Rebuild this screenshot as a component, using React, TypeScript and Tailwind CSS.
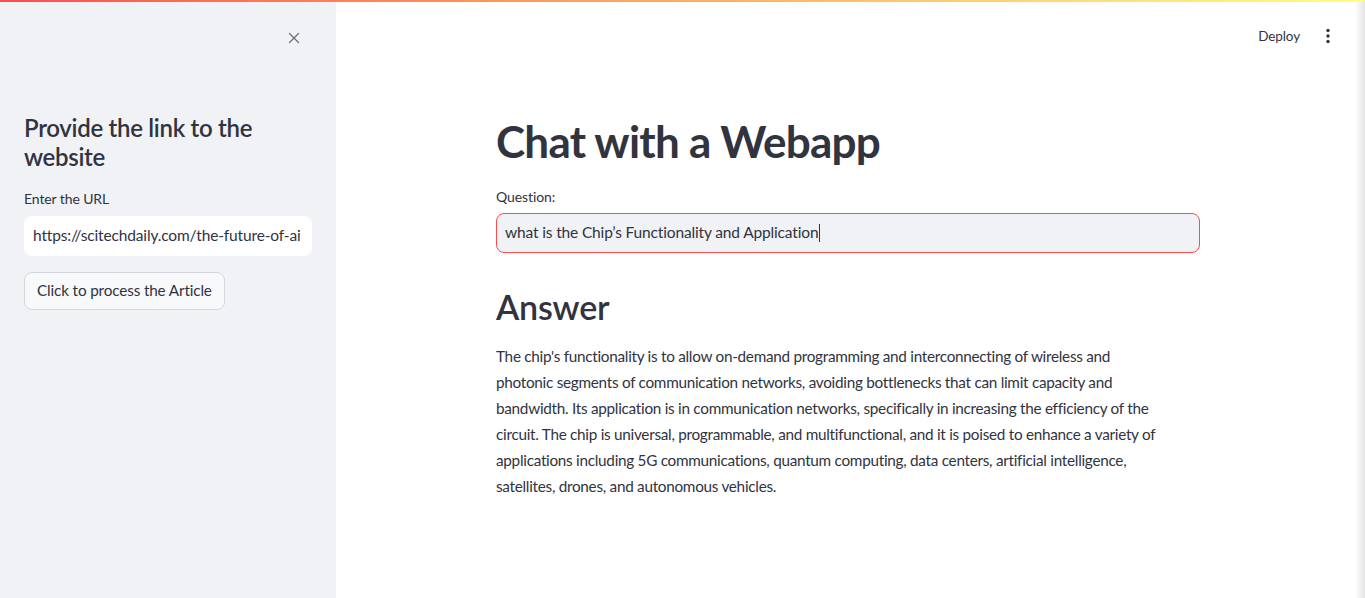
import { X } from 'lucide-react';

const font = { fontFamily: 'Lato, "Noto Sans", sans-serif' };

const answerLines = [
  "The chip's functionality is to allow on-demand programming and interconnecting of wireless and",
  'photonic segments of communication networks, avoiding bottlenecks that can limit capacity and',
  'bandwidth. Its application is in communication networks, specifically in increasing the efficiency of the',
  'circuit. The chip is universal, programmable, and multifunctional, and it is poised to enhance a variety of',
  'applications including 5G communications, quantum computing, data centers, artificial intelligence,',
  'satellites, drones, and autonomous vehicles.',
];

function Sidebar() {
  return (
    <aside className="w-[336px] shrink-0 bg-[#f0f2f6] px-6 text-[#31333f]">
      <div className="flex h-[72px] items-center justify-end pr-[2px]">
        <button className="flex h-8 w-8 items-center justify-center text-[#6b6f7b]">
          <X className="h-[18px] w-[18px]" strokeWidth={1.6} />
        </button>
      </div>
      <h2 className="mt-[40px] text-[24px] font-semibold leading-[1.2] tracking-[-0.3px]">Provide the link to the website</h2>
      <label className="mt-[17px] block text-[14px] leading-5 tracking-[-0.1px]">Enter the URL</label>
      <div className="mt-[7px] flex h-10 items-center overflow-hidden rounded-lg bg-white px-[9px]">
        <span className="whitespace-nowrap text-[15.5px] tracking-[-0.15px]">https://scitechdaily.com/the-future-of-ai</span>
      </div>
      <button className="mt-4 h-[38px] rounded-lg border border-[#d5d7dd] bg-[#f8f9fb] px-3 text-[15.3px] tracking-[-0.15px]">
        Click to process the Article
      </button>
    </aside>
  );
}

function Header() {
  return (
    <div className="flex h-[68px] items-center justify-end gap-3 pr-[19px] text-[#31333f]">
      <button className="px-2 text-[13.5px] tracking-[-0.1px]">Deploy</button>
      <svg width="16" height="16" viewBox="0 0 16 16" className="text-[#31333f]">
        <circle cx="8" cy="2.5" r="1.7" fill="currentColor" />
        <circle cx="8" cy="8" r="1.7" fill="currentColor" />
        <circle cx="8" cy="13.5" r="1.7" fill="currentColor" />
      </svg>
    </div>
  );
}

export default function App() {
  return (
    <div className="flex h-[598px] flex-col overflow-hidden bg-white" style={font}>
      <div className="h-[2px] w-full shrink-0 bg-gradient-to-r from-[#ff4b4b] to-[#fffd80]" />
      <div className="flex min-h-0 flex-1">
        <Sidebar />
        <main className="flex min-w-0 flex-1 flex-col text-[#31333f]">
          <Header />
          <div className="ml-[160px] w-[704px]">
            <h1 className="mt-[45px] text-[44px] font-bold leading-[1.2] tracking-[-0.75px]">Chat with a Webapp</h1>
            <label className="mt-[19px] block text-[14px] leading-5 tracking-[-0.1px]">Question:</label>
            <div className="mt-[6px] flex h-[40px] items-center rounded-lg border border-[#ff4b4b] bg-[#f0f2f6] px-2">
              <span className="text-[15.5px] tracking-[-0.15px]">what is the Chip’s Functionality and Application</span>
              <span className="ml-px inline-block h-[18px] w-px bg-[#31333f]" />
            </div>
            <h2 className="mt-[32px] text-[34px] font-semibold leading-[43px] tracking-[-0.2px]">Answer</h2>
            <p className="mt-[15px] whitespace-nowrap text-[15.3px] leading-[26px] tracking-[-0.28px]">
              {answerLines.map((line, i) => (
                <span key={i}>
                  {line}
                  {i < answerLines.length - 1 && <br />}
                </span>
              ))}
            </p>
          </div>
        </main>
        <div className="w-[10px] shrink-0 bg-gradient-to-r from-white to-[#e4e4e4]" />
      </div>
    </div>
  );
}
